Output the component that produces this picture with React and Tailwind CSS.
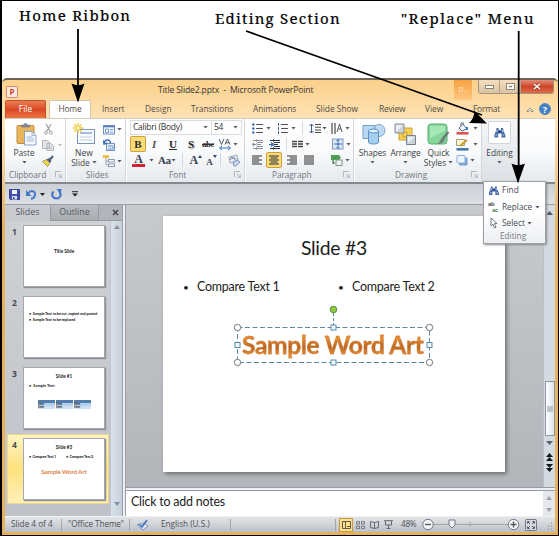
import React from 'react';

const ui = "font-['Open_Sans','Noto_Sans',sans-serif]";
const calibri = "font-['Lato','Open_Sans',sans-serif]";

function Caret({ className = '' }) {
  return (
    <svg className={`shrink-0 ${className}`} width="5" height="3" viewBox="0 0 5 3">
      <path d="M0.4 0h4.2L2.5 2.5z" fill="#555b63" />
    </svg>
  );
}

function Icon({ w, h, className = '', children }) {
  return (
    <svg className={`shrink-0 ${className}`} width={w} height={h} viewBox={`0 0 ${w} ${h}`} fill="none">
      {children}
    </svg>
  );
}

function Launcher() {
  return (
    <Icon w={7} h={7} className="mb-0.5">
      <path d="M0.5 6V0.5H6M3 3l3 3M6.3 3.3V6.3H3.3" stroke="#a5aab1" strokeWidth="0.8" />
    </Icon>
  );
}

function Group({ width, label, launcher, labelClass = '', children }) {
  return (
    <div className={`${width} flex h-full shrink-0 flex-col border-r border-[#d3d6db] shadow-[1px_0_0_#fff]`}>
      <div className="flex h-[50px] shrink-0">{children}</div>
      <div className="flex h-3 items-center text-[#70767e]">
        <span className={`flex-1 whitespace-nowrap text-[8.3px] leading-none ${labelClass}`}>{label}</span>
        <span className="w-[10px]">{launcher && <Launcher />}</span>
      </div>
    </div>
  );
}

function Binoculars({ className = '' }) {
  return (
    <Icon w={12} h={11} className={className}>
      <path d="M2.6 1h2v2h2.4V1h2l.5 3 1.9 4v2.4H7.5V6.5H4.2v3.9H.4V7.5L2 4z" fill="#4a6da8" />
      <path d="M1.5 8h1.6M8.6 8h1.7M3 3v2M8.5 3v2" stroke="#b9cdec" strokeWidth="1.1" />
      <path d="M4.7 4h2.2v2H4.7z" fill="#24457f" />
    </Icon>
  );
}

function Lines({ type }) {
  const widths = type === 'left' ? [[0, 10], [0, 7], [0, 10], [0, 7], [0, 10]]
    : type === 'center' ? [[0, 10], [1.5, 8.5], [0, 10], [1.5, 8.5], [0, 10]]
    : type === 'right' ? [[0, 10], [3, 10], [0, 10], [3, 10], [0, 10]]
    : [[0, 10], [0, 10], [0, 10], [0, 10], [0, 10]];
  return (
    <Icon w={10} h={10}>
      {widths.map(([a, b], i) => <path key={i} d={`M${a} ${i * 2 + 1}H${b}`} stroke="#3c3c3c" strokeWidth="1.1" />)}
    </Icon>
  );
}

function Bullets({ numbered }) {
  return (
    <Icon w={11} h={11}>
      {[1.5, 5.5, 9.5].map((y) => (
        <g key={y}>
          {numbered
            ? <path d={`M1.5 ${y - 1.5}v3`} stroke="#3b62a6" strokeWidth="1" />
            : <circle cx="1.3" cy={y} r="1.2" fill="#3b62a6" />}
          <path d={`M4 ${y}h7`} stroke="#555" strokeWidth="1" />
        </g>
      ))}
    </Icon>
  );
}

function Indent({ dark }) {
  const c = dark ? '#26303e' : '#8b8f95';
  return (
    <Icon w={12} h={11}>
      <path d="M1 1.5h10M5 3.5h6M5 5.5h4M5 7.5h6M1 9.5h10" stroke={c} strokeWidth="1" />
      <path d={dark ? 'M0 5.5h3M2 3.5l2 2-2 2' : 'M1 5.5h3M2 4L.5 5.5 2 7'} stroke={dark ? '#2f62b5' : '#8b8f95'} strokeWidth="1.2" />
      <path d="M4.5 0v11" stroke={c} strokeWidth=".7" strokeDasharray="1 1" />
    </Icon>
  );
}

function Sep({ className = '' }) {
  return <span className={`h-[14px] w-px shrink-0 bg-[#d4d7db] ${className}`} />;
}

function Clipboard() {
  return (
    <Group width="w-[61px]" label="Clipboard" launcher labelClass="pl-1 tracking-[-0.05px]">
      <div className="flex w-[34px] flex-col items-center pl-1 pt-1">
        <Icon w={21} h={23} className="ml-1">
          <rect x="1" y="2.5" width="17" height="18" rx="1" fill="#e8b45c" stroke="#c08c3d" />
          <path d="M5.5 4V2h2.3c.4-2 3-2 3.4 0h2.3v2z" fill="#868d98" stroke="#6a717b" strokeWidth=".6" />
          <path d="M8.5 8.5h7.5l4 4V22H8.5z" fill="#f5f9ff" stroke="#8ba0c3" />
          <path d="M16 8.5v4h4M10.5 14h6M10.5 16h7.5M10.5 18h7.5" stroke="#9ab1d6" strokeWidth=".9" />
        </Icon>
        <span className="mt-0.5 text-[8.3px] leading-[10px]">Paste</span>
        <Caret className="mt-[3px]" />
      </div>
      <div className="flex flex-col pl-[3px] pt-[2px]">
        <div className="flex h-4 items-center">
          <Icon w={9} h={11} className="ml-0.5">
            <path d="M2 0l4 7M7 0L3 7" stroke="#9ba0a8" strokeWidth="1.2" />
            <circle cx="2" cy="8.6" r="1.4" stroke="#9ba0a8" /><circle cx="6.8" cy="8.6" r="1.4" stroke="#9ba0a8" />
          </Icon>
        </div>
        <div className="flex h-4 items-center gap-1">
          <Icon w={12} h={11}>
            <path d="M.5.5h5l2 2v6h-7zM5 3.5h4l2.5 2.5v4.5H5z" fill="#e3e4e6" stroke="#b2b5b9" />
            <path d="M6.5 6h2M6.5 8h3.5" stroke="#b5b9be" strokeWidth=".8" />
          </Icon>
          <Icon w={4} h={3}><path d="M0 0h4L2 2z" fill="#b5b5b5" /></Icon>
        </div>
        <div className="flex h-4 items-center">
          <Icon w={12} h={12}>
            <path d="M.5 6.5l4-2L8 8 5.5 11.5z" fill="#f0d352" stroke="#94893c" strokeWidth=".7" />
            <path d="M4.5 4.5L8 8l1.5-2.5L7 3z" fill="#4d6079" /><path d="M8 4.5L11 1" stroke="#485a77" strokeWidth="2" />
          </Icon>
        </div>
      </div>
    </Group>
  );
}

function Slides() {
  return (
    <Group width="w-[60px]" label="Slides" labelClass="pl-[20px]">
      <div className="flex w-[36px] flex-col items-center pt-1">
        <Icon w={23} h={22}>
          <rect x="4.5" y="6.5" width="17" height="14" fill="#f9fcff" stroke="#7c97be" />
          <path d="M7 10h12" stroke="#a9bddb" strokeWidth="2" /><path d="M7 14h12M7 17h12" stroke="#c3cede" />
          <path d="M5 0v10M0 5h10M1.5 1.5l7 7M8.5 1.5l-7 7" stroke="#efc52b" strokeWidth="1.3" />
          <circle cx="5" cy="5" r="1.8" fill="#fff8c8" />
        </Icon>
        <span className="mt-[3px] text-[8.5px] leading-[10px]">New</span>
        <span className="flex items-center gap-[2px] text-[8.3px] leading-[9px]">Slide<Caret /></span>
      </div>
      <div className="flex flex-col pl-px pt-[2px]">
        <div className="flex h-4 items-center gap-[2px]">
          <Icon w={12} h={11}>
            <rect x=".5" y="1.5" width="11" height="8.5" fill="#eef5fd" stroke="#6d8fbe" />
            <path d="M1 2.5h10" stroke="#5e83ba" strokeWidth="1.7" /><path d="M2.5 5h3v3.5h-3zM7 5.5h3M7 8h3" stroke="#79a2d3" />
          </Icon><Caret />
        </div>
        <div className="flex h-4 items-center">
          <Icon w={12} h={12}>
            <rect x="3.5" y="4.5" width="8" height="7" fill="#dceafb" stroke="#7591b9" />
            <path d="M1 4C2 0 7 0 7.5 4M.3 1.5L1 5l3-1" stroke="#3f70bd" strokeWidth="1.4" /><path d="M5 7h5v3H5" stroke="#6f9ad0" />
          </Icon>
        </div>
        <div className="flex h-4 items-center gap-[2px]">
          <Icon w={12} h={12}>
            <path d="M0 1.5h6" stroke="#eab728" strokeWidth="2.5" /><path d="M3 3v7h2M3 6h2" stroke="#9aa5b3" />
            <rect x="5.5" y="4.5" width="6" height="2.5" fill="#fff" stroke="#8a9bb2" /><rect x="5.5" y="9" width="6" height="2.5" fill="#fff" stroke="#8a9bb2" />
          </Icon><Caret />
        </div>
      </div>
    </Group>
  );
}

function FontGroup() {
  return (
    <Group width="w-[119px]" label="Font" launcher labelClass="pl-[43px]">
      <div className="flex w-full flex-col pl-1 pt-px">
        <div className="flex h-[15px] w-[112px] border border-[#d9dce0] bg-white text-[8.5px] leading-none text-[#333]">
          <div className="flex w-[81px] items-center justify-between border-r border-[#d9dce0] pl-0.5 pr-[3px]"><span className="whitespace-nowrap tracking-[-0.25px]">Calibri (Body)</span><Caret /></div>
          <div className="flex flex-1 items-center justify-between pl-0.5 pr-[3px]"><span className="tracking-[-0.3px]">54</span><Caret /></div>
        </div>
        <div className="mt-px flex h-4 items-center font-['Liberation_Serif',serif] text-[11px] leading-none text-[#2c2c2c]">
          <span className="flex h-4 w-4 items-center justify-center rounded-[2px] border border-[#d3a13c] bg-[#fbdc77] font-bold">B</span>
          <span className="ml-[6px] w-[12px] font-bold italic text-[#555]">I</span>
          <span className="ml-[5px] w-[17px] font-bold underline">U</span>
          <span className="ml-[2px] w-[14px] font-bold [text-shadow:1px_1px_1px_#999]">S</span>
          <span className="w-[17px] text-[9px] font-bold tracking-[-0.5px] line-through">abc</span>
          <Icon w={12} h={12}>
            <path d="M1 10h10M3 8l-2.5 2L3 12M9 8l2.5 2L9 12" stroke="#3973b9" strokeWidth="1" />
            <path d="M0 1L2.5 6.5 5 1M6 6.5L8.5 1 11 6.5M7 4.8h3" stroke="#515962" strokeWidth="1" />
          </Icon><Caret className="ml-[2px]" />
        </div>
        <div className="flex h-4 items-center font-['Liberation_Serif',serif] leading-none text-[#384250]">
          <span className="ml-[2px] flex h-[13px] w-[13px] items-center justify-center border-b-[3px] border-[#d52232] text-[12px] font-bold">A</span>
          <Caret className="ml-[4px]" />
          <span className="ml-[4px] text-[11px] font-bold tracking-[-0.5px]">Aa</span><Caret className="ml-px" />
          <Sep className="ml-[6px]" />
          <span className="ml-[6px] text-[12px] font-bold">A</span><Icon w={4} h={3} className="mb-2"><path d="M0 3L2 0l2 3z" fill="#34455f" /></Icon>
          <span className="ml-[4px] mt-1 text-[9px] font-bold">A</span><Icon w={4} h={3} className="mb-2"><path d="M0 0h4L2 3z" fill="#34455f" /></Icon>
          <Sep className="ml-[3px]" />
          <Icon w={14} h={13} className="ml-[6px]">
            <path d="M2 3l8-2 1 5-8 3z" fill="#e7edf7" stroke="#9ca7bc" />
            <path d="M3 6l2-3 1 2M7 3v2h2" stroke="#54667e" strokeWidth=".8" />
            <path d="M6 9l4-3 3 2-4 4H7z" fill="#c8d8f0" stroke="#7e94bc" />
          </Icon>
        </div>
      </div>
    </Group>
  );
}

function Paragraph() {
  return (
    <Group width="w-[109px]" label="Paragraph" launcher labelClass="pl-[27px] tracking-[-0.1px]">
      <div className="flex w-full flex-col pl-[7px] pt-px">
        <div className="flex h-4 items-center">
          <Bullets /><Caret className="ml-[3px]" />
          <span className="w-[6px]" /><Bullets numbered /><Caret className="ml-[3px]" />
          <Sep className="ml-[6px]" />
          <Icon w={12} h={11} className="ml-[6px]">
            <path d="M2.5 1v9M.5 3l2-2 2 2M.5 8l2 2 2-2" stroke="#365b95" />
            <path d="M6 1.5h6M6 4.2h6M6 7h6M6 9.5h6" stroke="#444" />
          </Icon><Caret className="ml-[1px]" />
          <Icon w={12} h={11} className="ml-[4px]">
            <path d="M1 0v11M4 0v11" stroke="#45484c" strokeWidth="1.2" /><path d="M6 9L8.5 1 11 9M7 6h3" stroke="#54575c" strokeWidth="1" />
          </Icon><Caret className="ml-[2px]" />
        </div>
        <div className="flex h-4 items-center">
          <Indent /><span className="w-[5px]" /><Indent dark />
          <Sep className="ml-[5px]" />
          <Icon w={11} h={9} className="ml-[5px]">
            <path d="M0 1.5h5M0 4h5M0 6.5h5M6 1.5h5M6 4h5M6 6.5h5" stroke="#454545" strokeWidth="1.5" />
          </Icon><Caret className="ml-[2px]" />
          <Icon w={12} h={12} className="ml-[22px]">
            <rect x=".5" y="1" width="10.5" height="10" fill="#dfeaf8" stroke="#7a98c2" />
            <path d="M2 6h8M6 1.5v8M4.5 3L6 1.5 7.5 3M4.5 9L6 10.5 7.5 9" stroke="#376bb0" />
          </Icon><Caret className="ml-[2px]" />
        </div>
        <div className="flex h-4 items-center">
          <Lines type="left" />
          <span className="ml-[4px] flex h-4 w-4 items-center justify-center rounded-[2px] border border-[#d3a13c] bg-[#fbdc77]"><Lines type="center" /></span>
          <span className="w-[5px]" /><Lines type="right" />
          <span className="w-[7px]" /><Lines type="justify" />
          <Icon w={12} h={12} className="ml-[17px]">
            <path d="M0 1h8l2 2.5L8 6H0z" fill="#519e57" /><rect x="5" y="6" width="6" height="5.5" fill="#eef4f0" stroke="#80928a" />
            <path d="M2 6v3h2" stroke="#4c8955" strokeWidth="1.5" />
          </Icon><Caret className="ml-[2px]" />
        </div>
      </div>
    </Group>
  );
}

function Drawing() {
  return (
    <Group width="w-[128px]" label="Drawing" launcher labelClass="pl-[41px]">
      <div className="flex w-[35px] flex-col items-center pt-1">
        <Icon w={24} h={22} className="ml-1">
          <circle cx="17" cy="7.5" r="6" fill="#c2dbf3" stroke="#7ba4cd" />
          <rect x="1" y="2.5" width="12" height="13" fill="#bad7f3" stroke="#739fcb" />
          <path d="M6.5 8v11c0 2.7 10 2.7 10 0V8z" fill="#a4cdee" stroke="#5d91c5" />
          <ellipse cx="11.5" cy="8" rx="5" ry="2" fill="#dceffc" stroke="#5d91c5" />
        </Icon>
        <span className="ml-[2px] mt-[3px] text-[8.3px] leading-[10px] tracking-[-0.1px]">Shapes</span><Caret className="ml-[2px] mt-[3px]" />
      </div>
      <div className="flex w-[33px] flex-col items-center pt-1">
        <Icon w={23} h={23}>
          <path d="M9 5h9v9H9zM5 9h8v8H5z" fill="#f7d151" stroke="#c7a333" />
          <path d="M1 1h9v9H1z" fill="#cdd3db" stroke="#88909b" /><path d="M12.5 12.5h9v9h-9z" fill="#cdd3db" stroke="#79818d" />
          <path d="M2 2l7 0-7 7zM14 14h6l-6 6z" fill="#edf1f5" />
        </Icon>
        <span className="mt-0.5 text-[8.3px] leading-[10px] tracking-[-0.1px]">Arrange</span><Caret className="mt-[3px]" />
      </div>
      <div className="flex w-[33px] flex-col items-center pt-1">
        <Icon w={23} h={23}>
          <rect x="1" y="1" width="19" height="20" rx="3" fill="#85d698" stroke="#55ad6c" />
          <path d="M3 3h15v5L3 15z" fill="#a5e7b5" />
          <path d="M21.5 9l-6 7" stroke="#5f757c" strokeWidth="2" /><path d="M16 14l2 2c-1 4-4 5-8 5 3-1 3-5 6-7z" fill="#74827a" />
        </Icon>
        <span className="mt-0.5 text-[8.3px] leading-[10px]">Quick</span>
        <span className="flex items-center gap-[2px] text-[8.3px] leading-[9px]">Styles<Caret /></span>
      </div>
      <div className="flex flex-col pl-[1px] pt-px">
        <div className="flex h-4 items-center gap-[4px]">
          <Icon w={13} h={13}><path d="M3 6l4-4 4 5-5 2z" fill="#edf2f8" stroke="#606f83" /><path d="M5 4V1h3" stroke="#606f83" /><path d="M11 5v3" stroke="#3777c0" strokeWidth="2" /><path d="M.5 11.3h12" stroke="#df4b4d" strokeWidth="2.5" /></Icon><Caret />
        </div>
        <div className="flex h-4 items-center gap-[4px]">
          <Icon w={13} h={13}><path d="M.5 1.5h8v6h-8z" fill="#fff6cd" stroke="#a0a17f" /><path d="M4 8l7-6" stroke="#c89a33" strokeWidth="2" /><path d="M.5 11.3h12" stroke="#3e75a9" strokeWidth="2.5" /></Icon><Caret />
        </div>
        <div className="flex h-4 items-center gap-[2px]">
          <Icon w={12} h={12}><rect x="3" y="3.5" width="8.5" height="8" rx="1" fill="#7aa1d0" /><rect x="1" y="1.5" width="8" height="7.5" rx="1" fill="#edf5ff" stroke="#8dafd6" /></Icon><Caret />
        </div>
      </div>
    </Group>
  );
}

function Ribbon() {
  return (
    <div className="flex h-[64px] shrink-0 border-t border-[#d3ccbe] bg-linear-to-b from-white via-[#fafbfc] to-[#e5e9ed] text-[#3b3f45]">
      <Clipboard /><Slides /><FontGroup /><Paragraph /><Drawing />
      <div className="flex w-[36px] flex-col items-center border-r border-[#d3d6da] bg-linear-to-b from-[#f5f6f7] to-[#dde1e6]">
        <div className="mt-[2px] flex h-[23px] w-[23px] items-center justify-center rounded-[2px] border border-[#d1d4d9] bg-white"><Binoculars /></div>
        <span className="mt-1 text-[8.3px] leading-[10px]">Editing</span><Caret className="mt-[3px]" />
      </div>
    </div>
  );
}

function TitleBar() {
  return (
    <div className="flex h-5 shrink-0">
      <div className="flex w-[153px] items-center pl-px">
        <span className="mt-[3px] flex h-3 w-3 items-center justify-center rounded-[1px] border border-[#d58874] bg-[#ffe9df] text-[8px] font-bold leading-none text-[#c84530]">P</span>
      </div>
      <span className="w-[296px] whitespace-nowrap pt-[5px] text-[8.6px] leading-[10px] tracking-[-0.15px] text-[#333]">Title Slide2.pptx&nbsp; -&nbsp; Microsoft PowerPoint</span>
      <span className="flex h-full w-[18px] items-center justify-center bg-linear-to-b from-[#f5a13f] to-[#ffc77e] text-[7px] text-[#ffe9cb]">D..</span>
      <div className="ml-[6px] flex h-[14px] w-[76px] overflow-hidden rounded-b-[3px] border border-t-0 border-[#a4947e]">
        <span className="flex w-[21px] items-center justify-center border-r border-[#b4a48e] bg-linear-to-b from-[#f6dfbe] to-[#d8c3a5]"><Icon w={9} h={4}><rect x=".5" y=".5" width="8" height="3" fill="#fff" stroke="#8f8371" /></Icon></span>
        <span className="flex w-[21px] items-center justify-center border-r border-[#b4a48e] bg-linear-to-b from-[#f6dfbe] to-[#d8c3a5]"><Icon w={9} h={7}><rect x=".5" y=".5" width="8" height="6" fill="#fff" stroke="#8f8371" /><path d="M3 3h3v1H3z" fill="#8f8371" stroke="#8f8371" strokeWidth=".5" /></Icon></span>
        <span className="flex flex-1 items-center justify-center bg-linear-to-b from-[#e28c76] via-[#cd4528] to-[#dc6b46]"><Icon w={8} h={7}><path d="M1 1l6 5M7 1L1 6" stroke="#913c2d" strokeWidth="2.6" /><path d="M1 1l6 5M7 1L1 6" stroke="#fff" strokeWidth="1.5" /></Icon></span>
      </div>
    </div>
  );
}

function Tabs() {
  return (
    <div className="flex h-[18px] shrink-0 items-center whitespace-nowrap text-[8.4px] leading-none text-[#514c45]">
      <span className="flex h-full w-[41px] items-center justify-center rounded-t-[2px] border border-b-0 border-[#c4532a] bg-linear-to-b from-[#ec7c52] via-[#d94825] to-[#ef7240] text-white">File</span>
      <span className="ml-[3px] mr-[11px] flex h-[18px] w-[42px] items-center justify-center rounded-t-[2px] border border-b-0 border-[#d1c4ac] bg-white tracking-[-0.15px]">Home</span>
      <span className="w-[43px]">Insert</span>
      <span className="w-[46px]">Design</span>
      <span className="w-[62px] tracking-[-0.1px]">Transitions</span>
      <span className="w-[63px] tracking-[-0.1px]">Animations</span>
      <span className="w-[63px]">Slide Show</span>
      <span className="w-[46px] tracking-[-0.15px]">Review</span>
      <span className="w-[48px]">View</span>
      <span className="w-[53px] tracking-[-0.2px]">Format</span>
      <Icon w={8} h={7}><path d="M1 5.5L4 2l3 3.5H5.3L4 4.2 2.700 5.500z" fill="#fff" stroke="#79736b" strokeWidth=".8" /></Icon>
      <span className="ml-[5px] flex h-3 w-3 items-center justify-center rounded-full border border-[#5b87bb] bg-[#3f80c8] text-[9px] font-bold text-white">?</span>
    </div>
  );
}

function QuickAccess() {
  return (
    <div className="flex h-[22px] shrink-0 items-center border-t-2 border-[#858a91] bg-linear-to-b from-[#cccfd5] to-[#dcdfe3] pl-[4px]">
      <Icon w={11} h={11}><path d="M.5.5h10v10H1.5l-1-1z" fill="#454fb0" stroke="#3a418f" /><path d="M3 1h5v4H3z" fill="#f2f4ff" /><path d="M3 7h5v3.5H3z" fill="#dce3f5" /><path d="M4 8h1.5v2H4z" fill="#3a418f" /></Icon>
      <Icon w={11} h={11} className="ml-[6px]"><path d="M2 4.5C5 .5 10 2 9 6c-.4 2-2 3.4-4 4" stroke="#477ccb" strokeWidth="2" /><path d="M0 1v6h5.5z" fill="#477ccb" /></Icon>
      <Icon w={5} h={3} className="ml-[3px]"><path d="M0 0h5L2.5 3z" fill="#222" /></Icon>
      <Icon w={11} h={11} className="ml-[6px]"><path d="M2.500 2.500C-.5 6 2 9.500 5.500 9.500S11 6 8.500 3" stroke="#3d72c7" strokeWidth="2" /><path d="M5.500 0h5l-1 5z" fill="#3d72c7" /></Icon>
      <Icon w={6} h={6} className="ml-[10px]"><path d="M0 .7h6" stroke="#222" /><path d="M0 2.5h6L3 5.5z" fill="#222" /></Icon>
    </div>
  );
}

function Thumb({ n, gap = '', selected, children }) {
  return (
    <div className={`${gap} ml-[3px] flex h-[68px] w-[100px] shrink-0 py-[3px] ${selected ? 'bg-linear-to-b from-[#fff3c2] via-[#ffe27d] to-[#fff0b8] outline outline-[#eed788]' : ''}`}>
      <span className="w-[15px] pl-[4px] pt-[2px] text-[8.5px] font-bold leading-[10px] text-[#444a52]">{n}</span>
      <div className={`${calibri} flex h-[62px] w-[82px] flex-col border border-[#a5a8ac] bg-white text-[4.6px] font-bold leading-[5px] text-[#222] shadow-[1px_1px_1px_#8c9095]`}>{children}</div>
    </div>
  );
}

function SlidePanel() {
  return (
    <div className="flex w-[117px] shrink-0 flex-col bg-[#c9cbd0]">
      <div className="flex h-4 shrink-0 text-[8.9px] leading-none text-[#565c64]">
        <span className="flex w-[46px] items-center justify-center border-r border-[#979ba1] bg-[#c9cbd0] pb-px">Slides</span>
        <span className="flex w-[48px] items-center justify-center border-b border-r border-[#979ba1] bg-linear-to-b from-[#b9bdc2] to-[#a9adb2]">Outline</span>
        <span className="flex flex-1 items-center justify-center border-b border-[#979ba1] bg-[#b1b5bb] pl-[9px]"><Icon w={7} h={7}><path d="M1 1l5 5M6 1L1 6" stroke="#42474e" strokeWidth="1.5" /></Icon></span>
      </div>
      <div className="flex flex-1 bg-linear-to-b from-[#d0d1d5] to-[#bfc2c8]">
        <div className="flex w-[105px] flex-col pt-px">
          <Thumb n="1"><span className="mt-[23px] text-center">Title Slide</span></Thumb>
          <Thumb n="2" gap="mt-[3px]">
            <div className="mt-[14px] flex flex-col gap-px pl-[5px] text-[3.9px] tracking-[-0.15px]"><span className="whitespace-nowrap">•&nbsp; Sample Text to be cut, copied and pasted</span><span>•&nbsp; Sample Text to be replaced</span></div>
          </Thumb>
          <Thumb n="3" gap="mt-[3px]">
            <span className="mt-[6px] text-center">Slide #1</span>
            <span className="mt-[4px] pl-[5px] text-[4px]">•&nbsp; Sample Text</span>
            <div className="ml-[14px] mt-[12px] grid w-[53px] grid-cols-3 gap-x-px text-[3px] leading-[3px]">
              {[0, 1, 2].map((i) => <div key={i} className="bg-[#cfe0f1]"><div className="h-[3px] bg-[#517eac]" /><div className="h-[3px] bg-[#b3d0ee]">Item</div><div className="h-[3px]">Item</div></div>)}
            </div>
          </Thumb>
          <Thumb n="4" gap="mt-[3px]" selected>
            <span className="mt-[6px] text-center">Slide #3</span>
            <div className="mt-[4px] flex pl-[5px] text-[3.8px] tracking-[-0.2px]"><span className="w-[37px]">•&nbsp; Compare Text 1</span><span>•&nbsp; Compare Text 2</span></div>
            <span className="mt-[9px] text-center text-[6.2px] leading-[7px] tracking-[-0.12px] text-[#dc8145]">Sample Word Art</span>
          </Thumb>
        </div>
        <div className="flex flex-1 flex-col items-center justify-between border-l border-[#bdc5d0] bg-linear-to-r from-[#dbe2eb] to-[#c6cfda] pb-[10px] pt-[4px]">
          <Icon w={6} h={4}><path d="M0 4L3 0l3 4z" fill="#8a919c" /></Icon>
          <Icon w={6} h={4}><path d="M0 0h6L3 4z" fill="#7a91ad" /></Icon>
        </div>
      </div>
    </div>
  );
}

function WordArt() {
  return (
    <div className="relative ml-[74px] mt-[31px] h-[36px] w-[193px]">
      <span className={`${calibri} block whitespace-nowrap bg-linear-to-b from-[#e58a34] from-35% via-[#b9661f] via-58% to-[#ec923a] to-85% bg-clip-text pl-[5px] pt-[2px] text-[24.5px] font-bold leading-[32px] tracking-[-0.33px] text-transparent [-webkit-text-stroke:0.3px_#c87428]`}>Sample Word Art</span>
      <svg className="absolute -left-1 -top-6" width="203" height="66" viewBox="0 0 203 66" fill="none">
        <rect x="4.5" y="24.5" width="192" height="35" stroke="#5a85a3" strokeDasharray="5 2.5" />
        <path d="M100.5 10v14" stroke="#5a85a3" strokeDasharray="3 2" />
        <circle cx="100.5" cy="6.500" r="3.3" fill="#8bcc3e" stroke="#5f8c48" />
        {[[4.5, 24.5], [196.5, 24.5], [4.5, 59.5], [196.5, 59.5]].map(([x, y]) => <circle key={`${x}-${y}`} cx={x} cy={y} r="3.2" fill="#fff" stroke="#71787e" />)}
        {[[100.5, 24.5], [100.5, 59.5], [4.5, 42], [196.5, 42]].map(([x, y]) => <rect key={`${x}-${y}`} x={x - 2.5} y={y - 2.5} width="5" height="5" fill="#f2fcff" stroke="#568caa" />)}
      </svg>
    </div>
  );
}

function Editor() {
  return (
    <div className="flex min-w-0 flex-1 flex-col">
      <div className="flex h-[282px] shrink-0">
        <div className="flex-1 bg-linear-to-b from-[#c9cace] to-[#b3b5ba] pl-[37px] pt-[11px]">
          <div className={`${calibri} flex h-[256px] w-[342px] flex-col bg-white text-[#1c1c1c] shadow-[2px_2px_4px_#6d7176]`}>
            <h1 className="mt-[20px] text-center text-[19.4px] leading-[24px] tracking-[-0.25px]">Slide #3</h1>
            <div className="mt-[18px] flex whitespace-nowrap pl-[20px] text-[12.5px] leading-[18px] tracking-[-0.25px]">
              <span className="w-[14px] text-[10px]">•</span><span className="w-[141px]">Compare Text 1</span><span className="w-[14px] text-[10px]">•</span><span>Compare Text 2</span>
            </div>
            <WordArt />
          </div>
        </div>
        <div className="flex w-[12px] shrink-0 flex-col items-center border-l border-[#bac0c8] bg-[#d4dae2]">
          <Icon w={7} h={4} className="mt-[6px]"><path d="M0 4l3.5-4L7 4z" fill="#515967" /></Icon>
          <div className="mt-[166px] flex h-[55px] w-[10px] shrink-0 items-center justify-center border border-[#8b95a3] bg-linear-to-r from-white to-[#dce2ea]"><Icon w={6} h={6}><path d="M0 1h6M0 3h6M0 5h6" stroke="#8c97a6" /></Icon></div>
          <Icon w={7} h={4} className="mt-[5px]"><path d="M0 0h7L3.5 4z" fill="#59616e" /></Icon>
          <Icon w={7} h={19} className="mt-[8px]"><path d="M0 4l3.500-4L7 4zM0 8l3.500-4L7 8zM0 11h7l-3.500 4zM0 15h7l-3.500 4z" fill="#15191f" /></Icon>
        </div>
      </div>
      <div className="h-[4px] shrink-0 border-y border-[#989da4] bg-[#edf0f4]" />
      <div className="flex h-[26px] shrink-0 bg-white">
        <span className={`${calibri} flex-1 pl-[5px] pt-[4px] text-[12.4px] leading-[14px] tracking-[-0.2px] text-[#222]`}>Click to add notes</span>
        <div className="flex w-[12px] flex-col items-center justify-between bg-[#e4e8ee] py-[5px]"><Icon w={6} h={4}><path d="M0 4l3-4 3 4z" fill="#9aa3af" /></Icon><Icon w={6} h={4}><path d="M0 0h6L3 4z" fill="#9aa3af" /></Icon></div>
      </div>
    </div>
  );
}

function StatusBar() {
  return (
    <div className="flex h-[16px] shrink-0 items-center whitespace-nowrap border-t border-[#eef0f2] bg-linear-to-b from-[#e3e5e8] to-[#bdc0c6] text-[8.2px] leading-none text-[#4d525a]">
      <span className="w-[56px] pl-[6px]">Slide 4 of 4</span>
      <span className="flex h-3 w-[68px] items-center border-l border-[#a4a8ae] pl-[6px] tracking-[-0.1px]">"Office Theme"</span>
      <span className="flex h-3 w-[29px] items-center border-l border-[#a4a8ae] pl-[6px]"><Icon w={13} h={12}><path d="M1 6l7-2 4 3-5 4z" fill="#e0e8f6" stroke="#8296b9" /><path d="M3 5l3 3 5-7" stroke="#4475b7" strokeWidth="1.7" /></Icon></span>
      <span className="flex h-3 w-[73px] items-center border-r border-[#a4a8ae] pl-[3px]">English (U.S.)</span>
      <span className="ml-[104px] h-3 w-px bg-[#a4a8ae]" />
      <span className="ml-[3px] flex h-[14px] w-[14px] items-center justify-center border border-[#ca9940] bg-[#fce08a]"><Icon w={9} h={8}><path d="M.5.5h8v7h-8zM3.5.5v7M5 5.5h3" stroke="#605a4c" /></Icon></span>
      <Icon w={9} h={8} className="ml-[3px]"><path d="M.5.5h3v2.5h-3zM5.5.5h3v2.5h-3zM.5 5h3v2.5h-3zM5.5 5h3v2.5h-3z" stroke="#636a72" strokeWidth=".8" /></Icon>
      <Icon w={9} h={8} className="ml-[5px]"><path d="M4.5 1.5v6L.5 6.5v-6l4 1 4-1v6l-4 1" stroke="#636a72" /></Icon>
      <Icon w={9} h={9} className="ml-[5px]"><path d="M0 .7h9M1.5 1v4h6V1M4.5 5v3M2.5 8.5h4" stroke="#636a72" /></Icon>
      <span className="ml-[8px] w-[20px] tracking-[-0.25px]">48%</span>
      <Icon w={100} h={13}>
        <path d="M12 6.5h76M49 4v5" stroke="#a0a5ac" />
        <circle cx="7" cy="6.5" r="5.2" fill="#f4f5f6" stroke="#72787f" /><path d="M4 6.5h6" stroke="#555c65" strokeWidth="1.4" />
        <path d="M28 2h6v5l-3 3-3-3z" fill="#f0f2f4" stroke="#747b84" />
        <circle cx="92.5" cy="6.5" r="5.2" fill="#f4f5f6" stroke="#72787f" /><path d="M89.5 6.5h6M92.5 3.5v6" stroke="#555c65" strokeWidth="1.4" />
      </Icon>
      <Icon w={12} h={12} className="ml-[4px]"><rect x=".5" y=".5" width="11" height="11" rx="1" fill="#d5d8dc" stroke="#737980" /><path d="M2.5 4.5v-2h2M7.5 2.5h2v2M2.5 7.5v2h2M7.5 9.5h2v-2M3 3l2 2M9 3L7 5M3 9l2-2M9 9L7 7" stroke="#50565e" /></Icon>
      <Icon w={7} h={9} className="ml-[9px] mt-1"><path d="M5 1h1M5 4h1M2 4h1M5 7h1M2 7h1" stroke="#9a9fa6" strokeWidth="1.5" /></Icon>
    </div>
  );
}

function EditingMenu() {
  return (
    <div className="absolute left-[481px] top-[180px] flex h-[63px] w-[63px] flex-col border border-[#9da2a9] bg-linear-to-b from-white via-white to-[#eceef1] pl-[4px] text-[8.3px] leading-none text-[#464b52] shadow-[1px_1px_2px_#888]">
      <div className="flex h-[17px] items-center gap-[2px]"><Binoculars className="scale-90" /><span className="tracking-[0.1px]">Find</span></div>
      <div className="flex h-[16px] items-center gap-[2px]">
        <span className="flex h-3 w-3 shrink-0 flex-col font-['Liberation_Sans',sans-serif] text-[6px] font-bold leading-[6px] tracking-[-0.3px]"><span>ab</span><span className="pl-[4px] text-[#47845b]">ac</span></span>
        <span>Replace</span><Caret className="ml-px" />
      </div>
      <div className="flex h-[16px] items-center gap-[2px]">
        <Icon w={12} h={12}><path d="M3 1v8l2-2 1.5 4 1.5-.7L6.5 6.5H9z" fill="#fff" stroke="#68707b" strokeWidth=".9" /></Icon>
        <span>Select</span><Caret />
      </div>
      <span className="pl-[12px] pt-px text-[8.2px] text-[#757a82]">Editing</span>
    </div>
  );
}

function Annotations() {
  return (
    <div className="flex h-[77px] shrink-0 whitespace-nowrap font-['Noto_Serif','DejaVu_Serif',serif] text-[15px] leading-[18px] text-black [-webkit-text-stroke:0.2px_#000]">
      <span className="w-[196px] pl-[17px] pt-[5px] tracking-[1.3px]">Home Ribbon</span>
      <span className="w-[186px] pl-[17px] pt-[8px] tracking-[1.25px]">Editing Section</span>
      <span className="pl-[17px] pt-[8px] tracking-[1.5px]">"Replace" Menu</span>
    </div>
  );
}

function Arrows() {
  return (
    <svg className="pointer-events-none absolute -left-0.5 -top-px" width="559" height="536" viewBox="0 0 559 536">
      <path d="M78 29v58M246 31L482 115M518.700 31v138" stroke="#000" strokeWidth="1.8" />
      <path d="M78 102.500L71.500 83.500Q78 87 84.500 83.500zM487 123.500L469 123Q475 117.500 474 110.500zM518 183.500L511.500 163.500Q518 167 525 163.500z" fill="#000" />
    </svg>
  );
}

export default function App() {
  return (
    <div className={`${ui} relative flex h-[536px] w-[559px] flex-col overflow-hidden border border-l-2 border-black bg-white`}>
      <Annotations />
      <div className="flex h-[457px] shrink-0 flex-col rounded-t-[5px] border-t-2 border-[#6e6557] bg-linear-to-b from-[#fbd08a] via-[#ffe6bd] via-10% to-[#e4b260] to-32% px-[3px]">
        <TitleBar />
        <Tabs />
        <Ribbon />
        <QuickAccess />
        <div className="flex h-[312px] shrink-0 border-t border-[#999fa6]">
          <SlidePanel />
          <div className="w-[4px] shrink-0 border-x border-[#9ba0a7] bg-[#edf0f3]" />
          <Editor />
        </div>
        <StatusBar />
      </div>
      <EditingMenu />
      <Arrows />
    </div>
  );
}
